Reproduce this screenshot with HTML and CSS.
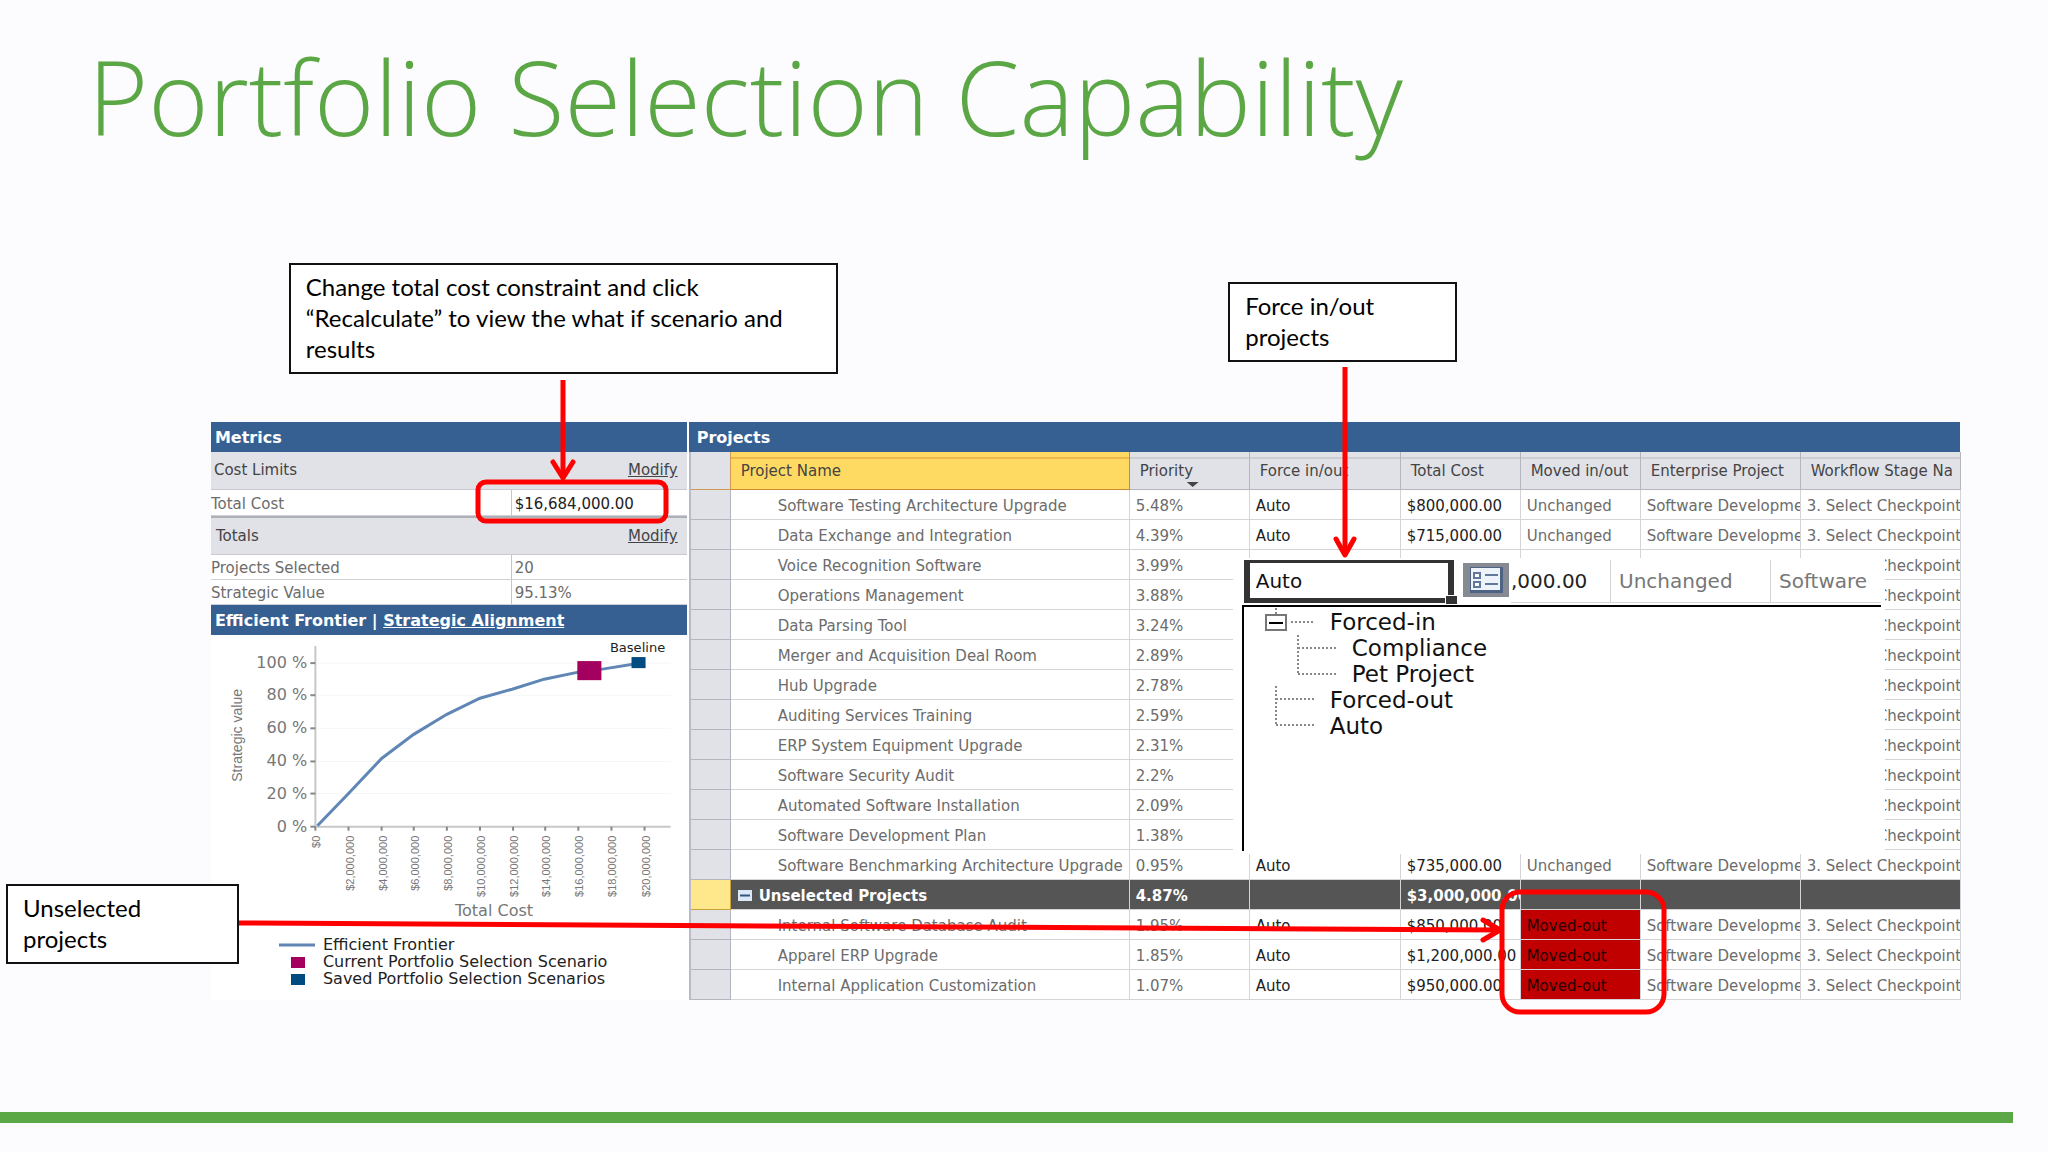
FILE: index.html
```html
<!DOCTYPE html>
<html lang="en">
<head>
    <meta charset="UTF-8">
    <meta name="viewport" content="width=device-width, initial-scale=1.0">
    <title>Portfolio Selection Capability</title>
    <link rel="stylesheet" href="styles.css">
</head>
<body>
    <main class="slide">
        <h1>Portfolio Selection Capability</h1>

        <div class="callouts">
            <p class="callout callout-cost">Change total cost constraint and click<br>“Recalculate” to view the what if scenario and<br>results</p>
            <p class="callout callout-force">Force in/out<br>projects</p>
        </div>

        <div class="app">
            <section class="metrics">
                <h2 class="bar">Metrics</h2>
                <div class="group"><span>Cost Limits</span><a href="#">Modify</a></div>
                <table class="values limits">
                    <tr><th scope="row">Total Cost</th><td class="strong">$16,684,000.00</td></tr>
                </table>
                <div class="group totals"><span>Totals</span><a href="#">Modify</a></div>
                <table class="values">
                    <tr><th scope="row">Projects Selected</th><td>20</td></tr>
                    <tr><th scope="row">Strategic Value</th><td>95.13%</td></tr>
                </table>
                <h2 class="bar">Efficient Frontier | <a href="#">Strategic Alignment</a></h2>
                <svg class="chart" viewBox="0 0 474 320" role="img" aria-label="Efficient frontier chart">
                    <path class="grid" d="M106 28H458M106 60H458M106 93H458M106 126H458M106 158H458"/>
                    <path class="axis" d="M104 11V191H458"/>
                    <g id="ticks"></g>
                    <path class="frontier" d="M106 190L137 158L170 123L202 99L235 79L268 63L300 54L332 44L366 37L390 34L428 28"/>
                    <rect class="current" x="365" y="26" width="24" height="19"/>
                    <rect class="saved" x="419" y="22" width="14" height="11"/>
                    <text class="baseline" x="425" y="17">Baseline</text>
                    <text class="axis-title" transform="translate(31 100) rotate(-90)">Strategic value</text>
                    <text class="x-title" x="282" y="280">Total Cost</text>
                </svg>
                <ul class="legend">
                    <li><svg width="36" height="12"><path class="frontier" d="M0 6H36"/></svg>Efficient Frontier</li>
                    <li><svg width="36" height="12"><rect class="current" x="12" y="1" width="14" height="11"/></svg>Current Portfolio Selection Scenario</li>
                    <li><svg width="36" height="12"><rect class="saved" x="12" y="1" width="14" height="11"/></svg>Saved Portfolio Selection Scenarios</li>
                </ul>
            </section>

            <section class="projects">
                <h2 class="bar">Projects</h2>
                <table class="grid-table">
                    <colgroup>
                        <col class="c-mark"><col class="c-name"><col class="c-priority"><col class="c-force">
                        <col class="c-cost"><col class="c-moved"><col class="c-type"><col class="c-stage">
                    </colgroup>
                    <thead>
                        <tr>
                            <th></th>
                            <th class="sorted">Project Name</th>
                            <th class="priority">Priority</th>
                            <th>Force in/out</th>
                            <th>Total Cost</th>
                            <th>Moved in/out</th>
                            <th>Enterprise Project</th>
                            <th><div class="clip">Workflow Stage Name</div></th>
                        </tr>
                    </thead>
                    <tbody id="rows"></tbody>
                </table>

                <div class="picker">
                    <div class="picker-row">
                        <div class="picker-field">
                            <input class="picker-input" type="text" value="Auto" aria-label="Force in/out">
                        </div>
                        <button class="picker-button" type="button" aria-label="Choose value">
                            <svg width="46" height="34" viewBox="0 0 46 34">
                                <rect width="46" height="34" fill="#858a93"/>
                                <rect x="7" y="4" width="33" height="26" fill="#4d6485"/>
                                <rect x="8" y="5" width="29" height="22" fill="#eef3fb"/>
                                <path d="M11 10h6v5h-6zM11 19h6v5h-6z" fill="#fff" stroke="#60789c" stroke-width="2"/>
                                <path d="M22 12h13M22 21h13" stroke="#60789c" stroke-width="2"/>
                            </svg>
                        </button>
                        <span class="picker-cost">,000.00</span>
                        <span class="picker-cell">Unchanged</span>
                        <span class="picker-cell picker-last">Software</span>
                    </div>
                    <div class="tree">
                        <svg class="tree-lines" width="80" height="130" viewBox="0 0 80 130">
                            <path class="dots" d="M32 1V7M47 15H70M54 28V67M54 41H94M54 67H94M32 79V118M32 92H72M32 118H72"/>
                            <rect x="22" y="8" width="20" height="15" fill="#fff" stroke="#777" stroke-width="2"/>
                            <path d="M25 16H39" stroke="#000" stroke-width="2"/>
                        </svg>
                        <ul>
                            <li>Forced-in
                                <ul>
                                    <li>Compliance</li>
                                    <li>Pet Project</li>
                                </ul>
                            </li>
                            <li>Forced-out</li>
                            <li>Auto</li>
                        </ul>
                    </div>
                </div>
            </section>
        </div>

        <p class="callout callout-unselected">Unselected<br>projects</p>

        <svg class="marks" viewBox="0 0 2048 1152" preserveAspectRatio="none" aria-hidden="true">
            <path d="M563 380V476"/>
            <path class="head" d="M553 462L563 478L573 462"/>
            <path d="M1345 367V552"/>
            <path class="head" d="M1336 539L1345 555L1354 539"/>
            <path d="M239 923L1498 930"/>
            <path class="head" d="M1483 920L1500 930L1483 940"/>
            <rect x="478" y="482" width="188" height="39" rx="8"/>
            <rect x="1502" y="892" width="162" height="120" rx="18"/>
        </svg>

        <div class="footer-bar"></div>
    </main>

    <script>
        const type = 'Software Development';
        const stage = '3. Select Checkpoint';

        // name, priority, force in/out, total cost, moved in/out
        const projects = [
            ['Software Testing Architecture Upgrade', '5.48%', 'Auto', '$800,000.00', 'Unchanged'],
            ['Data Exchange and Integration', '4.39%', 'Auto', '$715,000.00', 'Unchanged'],
            ['Voice Recognition Software', '3.99%'],
            ['Operations Management', '3.88%'],
            ['Data Parsing Tool', '3.24%'],
            ['Merger and Acquisition Deal Room', '2.89%'],
            ['Hub Upgrade', '2.78%'],
            ['Auditing Services Training', '2.59%'],
            ['ERP System Equipment Upgrade', '2.31%'],
            ['Software Security Audit', '2.2%'],
            ['Automated Software Installation', '2.09%'],
            ['Software Development Plan', '1.38%'],
            ['Software Benchmarking Architecture Upgrade', '0.95%', 'Auto', '$735,000.00', 'Unchanged'],
            ['Unselected Projects', '4.87%', '', '$3,000,000.00', ''],
            ['Internal Software Database Audit', '1.95%', 'Auto', '$850,000.00', 'Moved-out'],
            ['Apparel ERP Upgrade', '1.85%', 'Auto', '$1,200,000.00', 'Moved-out'],
            ['Internal Application Customization', '1.07%', 'Auto', '$950,000.00', 'Moved-out']
        ];

        const collapse = '<svg class="collapse" width="14" height="11"><rect width="14" height="11" fill="#dbe8f5"/><path d="M2 5.5H12" stroke="#34557e" stroke-width="2"/></svg>';

        document.getElementById('rows').innerHTML = projects.map(([name, priority, force, cost, moved]) => {
            const group = name === 'Unselected Projects';
            const short = force === undefined;
            const out = moved === 'Moved-out';
            return `<tr class="${group ? 'group-row' : ''}">
                <td class="mark"></td>
                <td class="name">${group ? collapse : ''}${name}</td>
                <td>${priority}</td>
                <td class="dark">${force || ''}</td>
                <td class="dark">${cost || ''}</td>
                <td class="${out ? 'moved-out' : ''}">${moved || ''}</td>
                <td>${group || short ? '' : type}</td>
                <td>${group ? '' : stage}</td>
            </tr>`;
        }).join('');

        // axis ticks and labels
        let ticks = '';
        [28, 60, 93, 126, 158, 191].forEach((y, i) => {
            ticks += `<path class="tick" d="M99 ${y}H104"/><text class="y-label" x="96" y="${y + 5}">${100 - i * 20} %</text>`;
        });
        for (let i = 0; i <= 10; i++) {
            const x = 104 + Math.round(i * 32.75);
            const label = i ? `$${i * 2},000,000` : '$0';
            ticks += `<path class="tick" d="M${x} 191V195"/><text class="x-label" transform="translate(${x + 5} 200) rotate(-90)">${label}</text>`;
        }
        document.getElementById('ticks').innerHTML = ticks;
    </script>
</body>
</html>
```
FILE: styles.css
```css
* {
    box-sizing: border-box;
}
body {
    margin: 0;
    background: #fcfbfd;
    color: #6c6c6c;
    font-family: "DejaVu Sans", sans-serif;
    font-size: 15px;
}
.slide {
    position: relative;
    display: flex;
    flex-direction: column;
    min-height: 100vh;
    padding-bottom: 29px;
}
h1 {
    height: 262px;
    margin: 0;
    padding: 18px 0 0 88px;
    color: #5ba745;
    font-family: "Open Sans", sans-serif;
    font-size: 103px;
    font-weight: 300;
    line-height: 156px;
    white-space: nowrap;
}

/* callouts */
.callouts {
    display: flex;
    align-items: center;
    height: 112px;
    padding-left: 14.1%;
}
.callout {
    margin: 0;
    padding: 6px 15px 8px;
    border: 2px solid #111;
    background: #fff;
    color: #000;
    font-family: Lato, sans-serif;
    font-size: 24px;
    line-height: 31px;
    white-space: nowrap;
}
.callout-cost {
    width: 31.2%;
}
.callout-force {
    width: 13%;
    margin: 8px 0 0 22.2%;
}
.callout-unselected {
    position: absolute;
    left: 6px;
    top: 884px;
    width: 11.4%;
}

/* application */
.app {
    display: flex;
    width: 85.4%;
    margin: 48px 0 0 10.3%;
    background: #fff;
}
.metrics {
    flex: 0 0 27.2%;
}
.projects {
    position: relative;
    flex: 1;
    min-width: 0;
    margin-left: 2px;
}
.bar {
    height: 30px;
    margin: 0;
    padding-left: 4px;
    background: #366092;
    color: #fff;
    font-size: 16px;
    font-weight: bold;
    line-height: 31px;
}
.bar a {
    color: #fff;
}
.projects .bar {
    padding-left: 8px;
}
.group {
    display: flex;
    justify-content: space-between;
    height: 38px;
    padding: 0 9px 0 3px;
    border-bottom: 1px solid #c9c9d0;
    background: #e0e2e8;
    color: #444;
    line-height: 37px;
}
.group a {
    color: #444;
}
.totals {
    height: 39px;
    padding-left: 5px;
    border-top: 2px solid #aeb0b8;
}
table {
    width: 100%;
    border-collapse: separate;
    border-spacing: 0;
    table-layout: fixed;
}
th,
td {
    padding: 0;
    overflow: hidden;
    font-weight: normal;
    text-align: left;
    white-space: nowrap;
}
.values th {
    width: 63%;
}
.values th,
.values td {
    height: 25px;
    padding-top: 2px;
    border-bottom: 1px solid #d0d0d6;
}
.limits th,
.limits td {
    height: 26px;
}
.values td {
    padding-left: 3px;
    border-left: 1px solid #c4c4ca;
}
.values .strong {
    color: #222;
}

/* chart */
.chart {
    display: block;
    width: 100%;
    height: auto;
    margin-bottom: -20px;
}
.grid {
    fill: none;
    stroke: #f6f6f8;
}
.axis {
    fill: none;
    stroke: #c8c8c8;
    stroke-width: 2;
}
.tick {
    stroke: #888;
    stroke-width: 2;
}
.frontier {
    fill: none;
    stroke: #5f86b5;
    stroke-width: 3;
}
.current {
    fill: #a3005f;
}
.saved {
    fill: #004b80;
}
.chart text {
    fill: #777;
    font-size: 16px;
}
.chart .baseline {
    fill: #222;
    font-size: 13px;
    text-anchor: middle;
}
.chart .axis-title {
    font-family: "Liberation Sans", sans-serif;
    font-size: 14px;
    text-anchor: middle;
}
.chart .x-title {
    text-anchor: middle;
}
.chart .y-label {
    text-anchor: end;
}
.chart .x-label {
    font-family: "Liberation Sans", sans-serif;
    font-size: 11px;
    text-anchor: end;
}
.legend {
    margin: 0;
    padding: 0 0 0 68px;
    list-style: none;
    color: #222;
}
.legend li {
    display: flex;
    align-items: center;
    gap: 8px;
    height: 17px;
    font-size: 16px;
    white-space: nowrap;
}

/* project grid */
.grid-table {
    border-left: 2px solid #b9bacb;
}
.c-mark { width: 40px; }
.c-name { width: 399px; }
.c-priority { width: 120px; }
.c-force { width: 151px; }
.c-cost { width: 120px; }
.c-moved { width: 120px; }
.c-type { width: 160px; }
.c-stage { width: 160px; }
.grid-table th {
    height: 38px;
    padding-left: 10px;
    border-right: 1px solid #b4b5bd;
    border-bottom: 1px solid #b4b5bd;
    background: linear-gradient(#e0e2e6 5px, #cfccd4 5px, #cfccd4 7px, #e0e2e8 7px);
    color: #444;
}
.grid-table th:first-child {
    border-color: #d09a50;
    background: #e0e2e8;
}
.grid-table .sorted {
    border-color: #c98a33;
    background: linear-gradient(#ffda62 5px, #efb84e 5px, #efb84e 7px, #ffda62 7px);
}
.clip {
    margin-right: 8px;
    overflow: hidden;
}
/* sort arrow, hung below the label */
.grid-table .priority {
    position: relative;
}
.priority::after {
    content: "";
    position: absolute;
    right: 50px;
    bottom: 2px;
    width: 12px;
    height: 5px;
    background: #444;
    clip-path: polygon(0 0, 100% 0, 50% 100%);
}
.grid-table td {
    height: 30px;
    padding: 2px 0 0 6px;
    border-right: 1px solid #d3d3d8;
    border-bottom: 1px solid #d3d3d8;
}
.grid-table .mark {
    border-color: #b4b5bd;
    background: #e0e2e8;
}
.grid-table .name {
    padding-left: 47px;
}
.grid-table .dark {
    color: #222;
}
.grid-table .moved-out {
    background: #c00000;
    color: #240000;
}
.grid-table .group-row td {
    background: #555;
    color: #fff;
    font-weight: bold;
}
.grid-table .group-row .mark {
    border-color: #c9a23e;
    background: #ffe88c;
}
.grid-table .group-row .name {
    padding-left: 7px;
}
.collapse {
    margin-right: 7px;
}

/* force in/out picker */
.picker {
    position: absolute;
    top: 136px;
    left: 42.8%;
    width: 51.3%;
    height: 296px;
    padding: 2px 4px 0 9px;
    background: #fff;
    color: #111;
    font-size: 20px;
}
.picker-row {
    display: flex;
    height: 43px;
    margin-left: 2px;
    color: #777;
}
.picker-field {
    position: relative;
    width: 33%;
}
.picker-field::after {
    content: "";
    position: absolute;
    right: -3px;
    bottom: -1px;
    width: 11px;
    height: 8px;
    border: solid #fff;
    border-width: 1px 0 0 1px;
    background: #333;
}
.picker-input {
    width: 100%;
    height: 100%;
    padding: 0 0 0 6px;
    border: 6px solid #333;
    border-top-width: 3px;
    border-bottom-width: 5px;
    background: #fff;
    color: #111;
    font-family: inherit;
    font-size: inherit;
}
.picker-button {
    width: 46px;
    height: 34px;
    margin: 3px 2px 0 9px;
    padding: 0;
    border: 0;
    background: none;
    cursor: pointer;
}
.picker-cost {
    width: 99px;
    border-bottom: 1px solid #d3d3d8;
    color: #222;
    line-height: 42px;
}
.picker-cell {
    width: 160px;
    padding-left: 8px;
    border-left: 1px solid #d3d3d8;
    border-bottom: 1px solid #d3d3d8;
    line-height: 42px;
}
.picker-last {
    flex: 1;
    min-width: 0;
}
.tree {
    position: relative;
    height: 246px;
    margin-top: 2px;
    padding-top: 2px;
    border-top: 2px solid #000;
    border-left: 2px solid #000;
    font-size: 23px;
    line-height: 26px;
}
.tree-lines {
    position: absolute;
    top: 0;
    left: 0;
    overflow: visible;
}
.dots {
    fill: none;
    stroke: #888;
    stroke-width: 2;
    stroke-dasharray: 2 2;
}
.tree ul {
    margin: 0;
    padding: 0 0 0 86px;
    list-style: none;
}
.tree ul ul {
    padding-left: 22px;
}

/* red annotations over the screen */
.marks {
    position: absolute;
    top: 0;
    left: 0;
    width: 100%;
    height: 1152px;
    fill: none;
    stroke: #f00;
    stroke-width: 5;
    pointer-events: none;
}
.head {
    stroke-linecap: round;
    stroke-linejoin: round;
}
.footer-bar {
    width: 98.3%;
    height: 11px;
    margin-top: auto;
    background: #5da846;
}
```
